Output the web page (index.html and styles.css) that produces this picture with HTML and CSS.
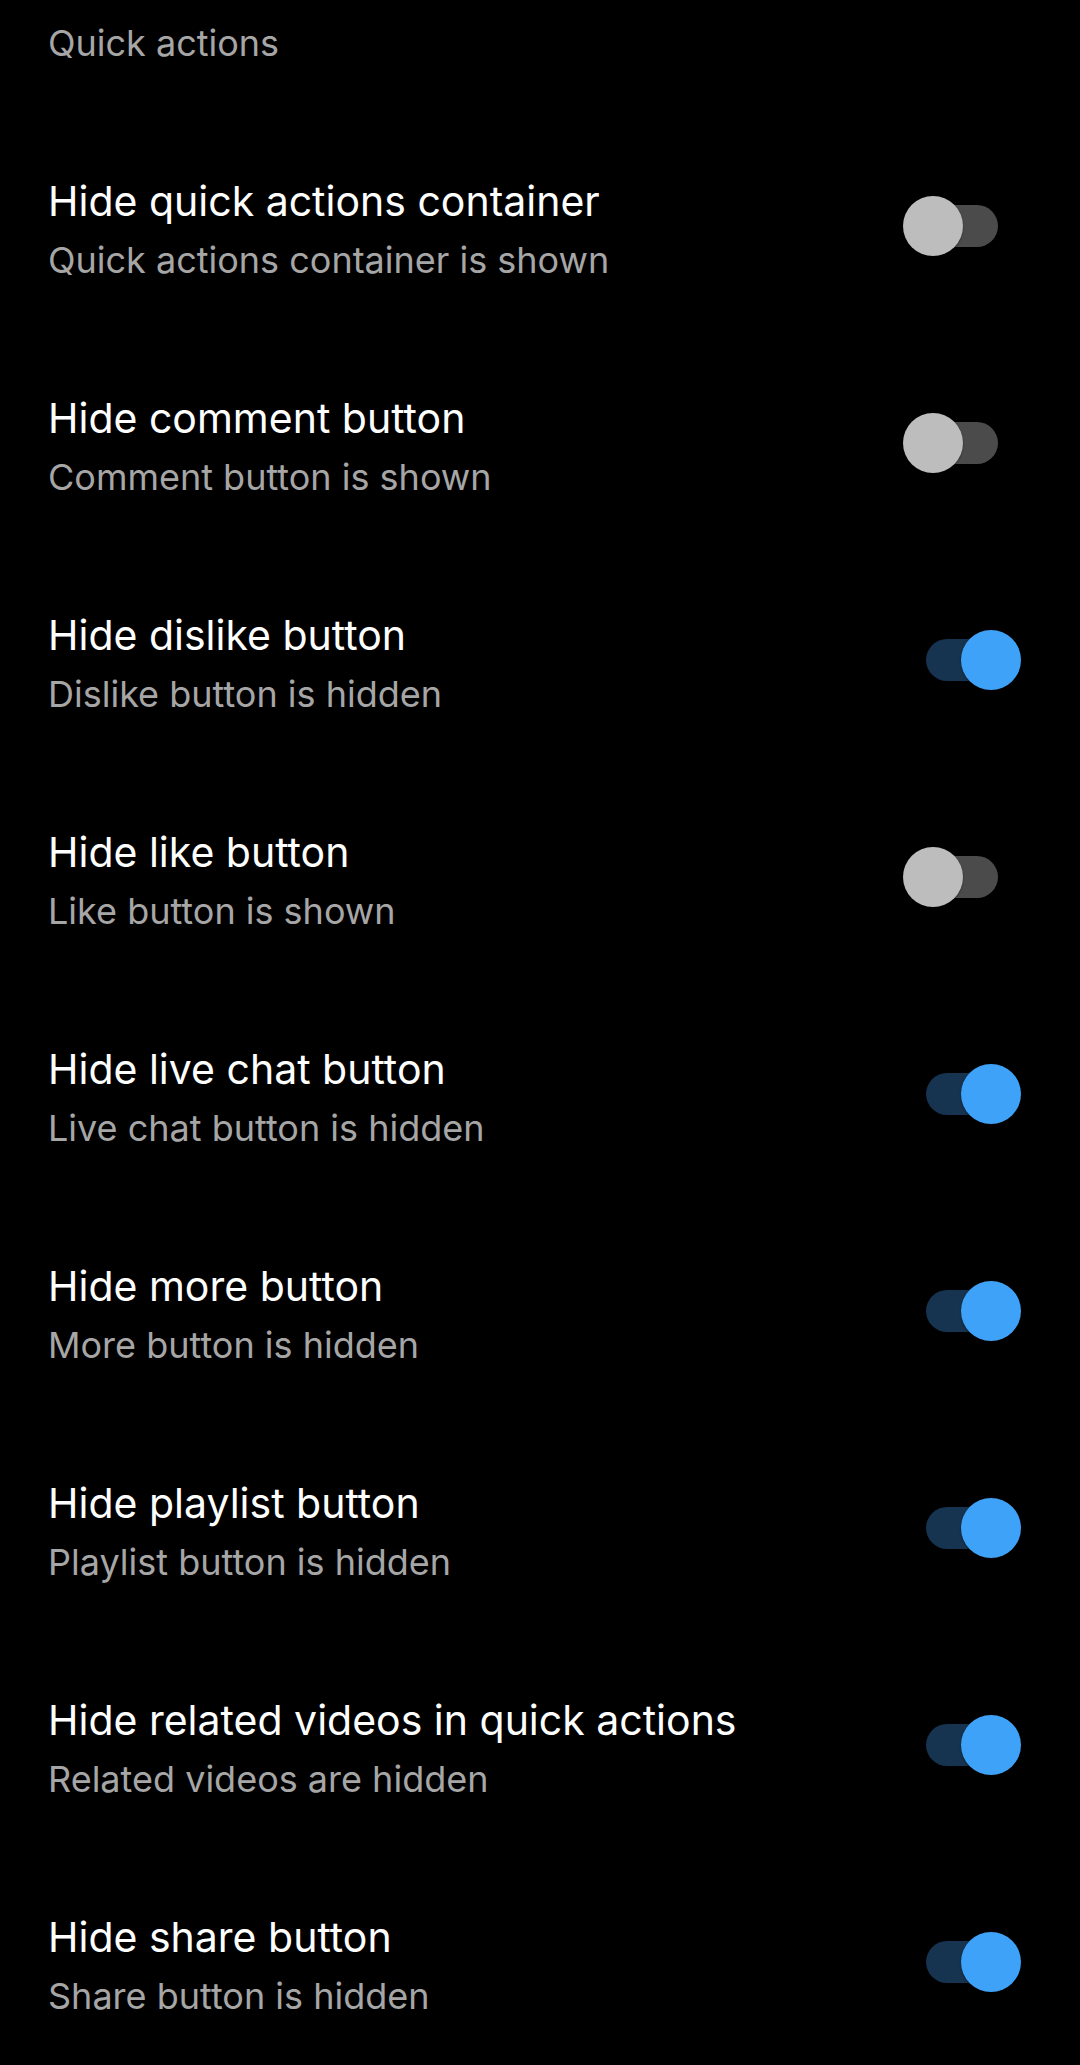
FILE: index.html
```html
<!DOCTYPE html>
<html lang="en">
<head>
<meta charset="utf-8">
<title>Quick actions</title>
<link rel="stylesheet" href="styles.css">
</head>
<body>
<main class="screen">
  <h2 class="category">Quick actions</h2>
  <ul class="prefs">
    <li class="pref">
      <div class="text"><div class="title">Hide quick actions container</div><div class="summary">Quick actions container is shown</div></div>
      <span class="switch"><span class="track"></span><span class="thumb"></span></span>
    </li>
    <li class="pref">
      <div class="text"><div class="title">Hide comment button</div><div class="summary">Comment button is shown</div></div>
      <span class="switch"><span class="track"></span><span class="thumb"></span></span>
    </li>
    <li class="pref">
      <div class="text"><div class="title">Hide dislike button</div><div class="summary">Dislike button is hidden</div></div>
      <span class="switch on"><span class="track"></span><span class="thumb"></span></span>
    </li>
    <li class="pref">
      <div class="text"><div class="title">Hide like button</div><div class="summary">Like button is shown</div></div>
      <span class="switch"><span class="track"></span><span class="thumb"></span></span>
    </li>
    <li class="pref">
      <div class="text"><div class="title">Hide live chat button</div><div class="summary">Live chat button is hidden</div></div>
      <span class="switch on"><span class="track"></span><span class="thumb"></span></span>
    </li>
    <li class="pref">
      <div class="text"><div class="title">Hide more button</div><div class="summary">More button is hidden</div></div>
      <span class="switch on"><span class="track"></span><span class="thumb"></span></span>
    </li>
    <li class="pref">
      <div class="text"><div class="title">Hide playlist button</div><div class="summary">Playlist button is hidden</div></div>
      <span class="switch on"><span class="track"></span><span class="thumb"></span></span>
    </li>
    <li class="pref">
      <div class="text"><div class="title">Hide related videos in quick actions</div><div class="summary">Related videos are hidden</div></div>
      <span class="switch on"><span class="track"></span><span class="thumb"></span></span>
    </li>
    <li class="pref">
      <div class="text"><div class="title">Hide share button</div><div class="summary">Share button is hidden</div></div>
      <span class="switch on"><span class="track"></span><span class="thumb"></span></span>
    </li>
  </ul>
</main>
</body>
</html>
```
FILE: styles.css
```css
html, body {
  margin: 0;
  padding: 0;
  background: #000;
}
body {
  font-family: Inter, Roboto, "Noto Sans", "Liberation Sans", sans-serif;
  color: #fff;
  width: 1080px;
  height: 2065px;
  overflow: hidden;
}
.screen {
  display: flex;
  flex-direction: column;
}
.category {
  margin: 0;
  padding: 18px 48px 49px;
  font-size: 36px;
  line-height: 50px;
  font-weight: 400;
  color: #a6a6a6;
}
.prefs {
  list-style: none;
  margin: 0;
  padding: 0;
}
.pref {
  display: flex;
  align-items: center;
  height: 217px;
  padding: 0 59px 0 48px;
}
.text {
  flex: 1;
  padding-top: 7px;
}
.title {
  font-size: 41px;
  line-height: 56px;
  color: #fff;
}
.summary {
  margin-top: 6px;
  font-size: 36px;
  line-height: 50px;
  color: #a6a6a6;
}
.switch {
  position: relative;
  width: 118px;
  height: 60px;
  flex: none;
}
.track {
  position: absolute;
  left: 23px;
  top: 9px;
  width: 72px;
  height: 42px;
  border-radius: 21px;
  background: #4b4b4b;
}
.thumb {
  position: absolute;
  left: 0;
  top: 0;
  width: 60px;
  height: 60px;
  border-radius: 50%;
  background: #bdbdbd;
  box-shadow: 0 1px 2px rgba(0,0,0,0.4);
}
.switch.on .track {
  background: #16334f;
}
.switch.on .thumb {
  left: 58px;
  background: #3ea2f8;
}
```
